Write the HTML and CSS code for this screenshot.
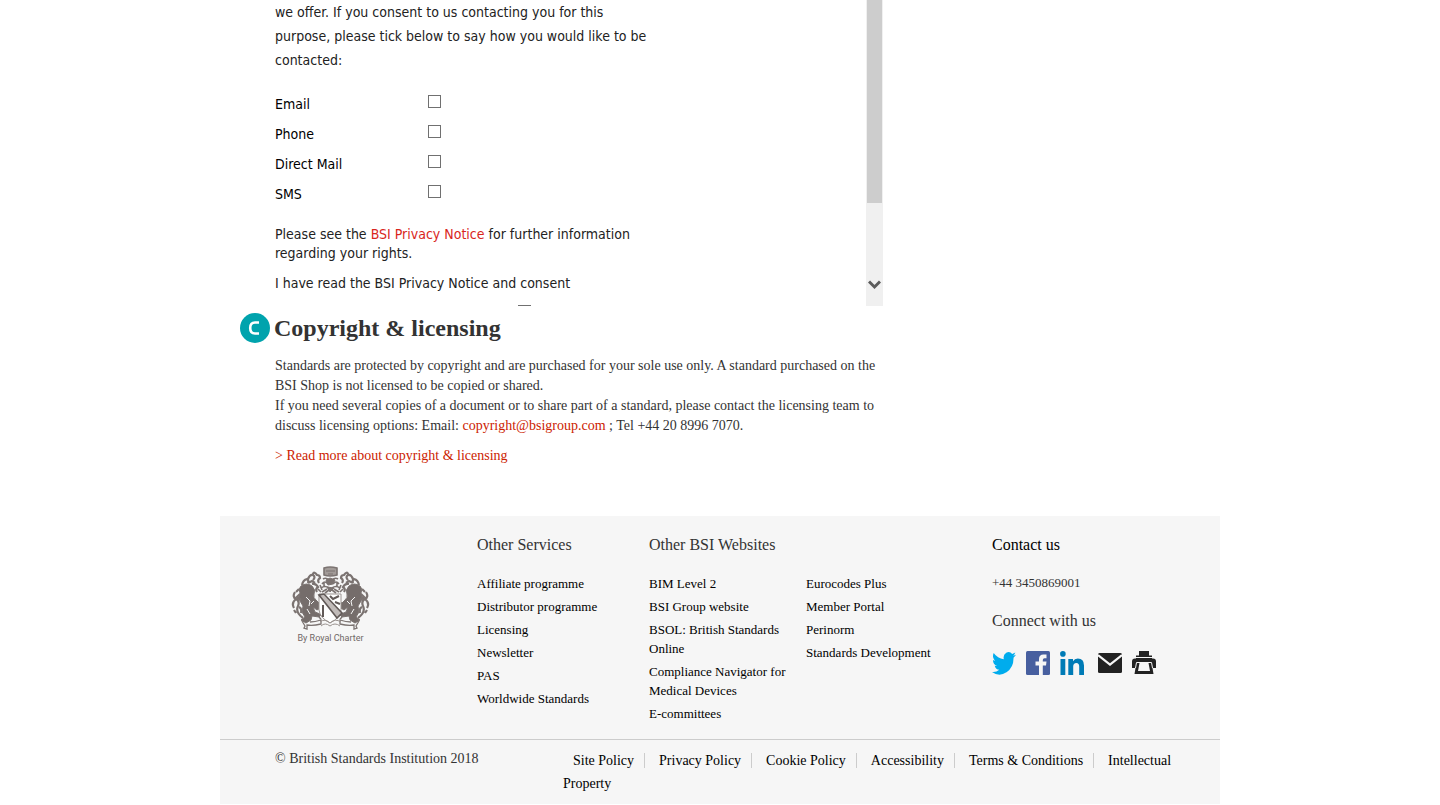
FILE: index.html
```html
<!DOCTYPE html>
<html lang="en">
<head>
<meta charset="utf-8">
<title>BSI Shop</title>
<link rel="stylesheet" href="styles.css">
</head>
<body>
<div class="page">
  <main class="main">
    <div class="frame">
      <form class="form">
        <p class="intro">we offer. If you consent to us contacting you for this purpose, please tick below to say how you would like to be contacted:</p>
        <div class="choices">
          <div class="choice"><label for="email">Email</label><input class="tick" type="checkbox" id="email"></div>
          <div class="choice"><label for="phone">Phone</label><input class="tick" type="checkbox" id="phone"></div>
          <div class="choice"><label for="mail">Direct Mail</label><input class="tick" type="checkbox" id="mail"></div>
          <div class="choice"><label for="sms">SMS</label><input class="tick" type="checkbox" id="sms"></div>
        </div>
        <p class="notice">Please see the <a class="red" href="#">BSI Privacy Notice</a> for further information regarding your rights.</p>
        <div class="consent"><label for="consent">I have read the BSI Privacy Notice and consent</label><input class="tick" type="checkbox" id="consent"></div>
      </form>
      <div class="scrollbar">
        <div class="thumb"></div>
        <button class="down" type="button" aria-label="Scroll down"><svg width="13" height="10" viewBox="0 0 13 10"><path d="M1 1.500L6.500 7L12 1.500" fill="none" stroke="#5c5c5c" stroke-width="3"/></svg></button>
      </div>
    </div>
    <section class="copyright">
      <div class="title">
        <svg class="badge" width="30" height="30" viewBox="0 0 30 30"><circle cx="15" cy="15" r="15" fill="#00a3ad"/><path d="M19 9.500H15Q10.200 9.500 10.200 15Q10.200 20.500 15 20.500H19" fill="none" stroke="#fff" stroke-width="2.600"/></svg>
        <h2>Copyright &amp; licensing</h2>
      </div>
      <div class="copy">
        <p>Standards are protected by copyright and are purchased for your sole use only. A standard purchased on the BSI Shop is not licensed to be copied or shared.<br>If you need several copies of a document or to share part of a standard, please contact the licensing team to discuss licensing options: Email: <a class="red" href="#">copyright@bsigroup.com</a> ; Tel +44 20 8996 7070.</p>
        <p><a class="red" href="#">&gt; Read more about copyright &amp; licensing</a></p>
      </div>
    </section>
  </main>
  <footer class="footer">
    <div class="columns">
      <figure class="crest">
        <svg width="80" height="66" viewBox="0 0 80 66" fill="none" stroke="#7b7371">
          <defs>
            <g id="supporter">
              <path d="M10 20Q16 16 21 20Q25 24 23 28Q22 32 25 34L28 37L32 35L31 41L26 44L22 41L24 46L29 48L28 51L21 50L20 54L15 57L10 54L14 51L11 46L12 40L9 35Q7 31 9 27Q7 23 10 20Z" fill="#756d6b"/>
              <path d="M11 19Q12 14 16 13Q18 14 17 17M17 13Q19 8 22 9Q25 11 22 14M21 18Q25 17 27 21Q24 23 26 26M22 8Q23 5 26 9Q29 9 29 12Q26 14 28 17M17 17L21 15L24 17" stroke-width="2.200"/>
              <path d="M12 52Q4 46 7 40Q9 35 5 33Q1 31 4 26M5 33Q0 37 3 42M8 41Q11 42 10 47M5 26L8 23M9 28L6 31L10 34M5 47L3 44" stroke-width="2.200"/>
              <path d="M15 31L19 35L18 40M16 43L19 48M23 35L20 38" stroke="#f6f6f6" stroke-width="1"/>
              <path d="M11 55L14 60L13 62L16 63L16 59Q22 60 30 58V54Q24 56 19 56M30 53Q27 51 29 49Q35 50 37 54" stroke-width="1.300"/>
              <path d="M32 13Q35 11 38 14M31 18Q34 14 37 18M30 22Q34 19 38 22M31 26L36 23M29 19L31 24M34 27L38 24M27 23L30 26M33 16V21" stroke-width="1.600"/>
            </g>
          </defs>
          <use href="#supporter"/><use href="#supporter" transform="translate(79 0) scale(-1 1)"/>
          <path d="M33 2Q39 0 46 2V9Q39 11 33 9Z" fill="#a29b98" stroke-width="1.600"/>
          <path d="M35 5H44M37 8H42" stroke-width="1"/>
          <path d="M35 14L39 12L44 14L42 18L37 19ZM36 21L43 22L39 26Z" fill="#7b7371"/>
          <path d="M28 28H50V44Q49 52 39 57Q29 52 28 44Z" fill="#fff" stroke="#9a9390" stroke-width="1"/>
          <path d="M28 29L33 28L51 47L46 52Z" fill="#c1bbb9" stroke="#625a58" stroke-width="1.600"/>
          <path d="M32 39V51M39 30L42 33L48 30M44 36L49 38" stroke="#625a58" stroke-width="2"/>
          <path d="M29 56Q34 52 39 57Q44 52 50 56M30 60Q34 56 39 60Q44 56 49 60" stroke="#9a9390" stroke-width="1"/>
        </svg>
        <figcaption>By Royal Charter</figcaption>
      </figure>
      <nav class="services">
        <h3>Other Services</h3>
        <ul>
          <li><a href="#">Affiliate programme</a></li><li><a href="#">Distributor programme</a></li><li><a href="#">Licensing</a></li><li><a href="#">Newsletter</a></li><li><a href="#">PAS</a></li><li><a href="#">Worldwide Standards</a></li>
        </ul>
      </nav>
      <nav class="websites">
        <h3>Other BSI Websites</h3>
        <div class="lists">
          <ul>
            <li><a href="#">BIM Level 2</a></li><li><a href="#">BSI Group website</a></li><li><a href="#">BSOL: British Standards Online</a></li><li><a href="#">Compliance Navigator for Medical Devices</a></li><li><a href="#">E-committees</a></li>
          </ul>
          <ul>
            <li><a href="#">Eurocodes Plus</a></li><li><a href="#">Member Portal</a></li><li><a href="#">Perinorm</a></li><li><a href="#">Standards Development</a></li>
          </ul>
        </div>
      </nav>
      <div class="contact">
        <h3><a href="#">Contact us</a></h3>
        <p class="tel">+44 3450869001</p>
        <h3 class="connect">Connect with us</h3>
        <div class="social">
          <a href="#" aria-label="Twitter"><svg width="24" height="24" viewBox="0 0 24 24"><path fill="#00aced" d="M24 4.600a10 10 0 0 1-2.800.8 5 5 0 0 0 2.100-2.700 10 10 0 0 1-3.100 1.200 4.900 4.900 0 0 0-8.400 4.500A14 14 0 0 1 1.700 3.100a4.900 4.900 0 0 0 1.500 6.600 5 5 0 0 1-2.200-.6 4.900 4.900 0 0 0 3.900 4.900 5 5 0 0 1-2.200.1 4.900 4.900 0 0 0 4.600 3.400A9.900 9.900 0 0 1 0 19.500 14 14 0 0 0 21.500 7.100 10 10 0 0 0 24 4.600z" transform="matrix(1 0 0 1.150 0 -1.500)"/></svg></a>
          <a href="#" aria-label="Facebook"><svg width="24" height="24" viewBox="0 0 24 24"><rect width="24" height="24" rx="1.500" fill="#475f9f"/><path fill="#f6f6f6" d="M13 24V14.500H9.500V10.500H13V8Q13 3.500 17.500 3.500H20.500V7.200H18.500Q16.800 7.200 16.800 9V10.500H20.500L20 14.500H16.800V24Z"/></svg></a>
          <a class="wide" href="#" aria-label="LinkedIn"><svg width="24" height="24" viewBox="0 0 24 24" fill="#007bb6"><circle cx="2.900" cy="2.900" r="2.800"/><path d="M.5 8H5.300V24H.5ZM8.300 8H13V10.200Q14.500 7.600 17.800 7.600Q24 7.600 24 14.500V24H19.200V15.500Q19.200 11.900 16.400 11.900Q13.200 11.900 13.200 15.500V24H8.300Z"/></svg></a>
          <a href="#" aria-label="Email"><svg width="24" height="24" viewBox="0 0 24 24"><rect y="2" width="24" height="20" rx="1.500" fill="#222"/><path d="M0 4L12 13.500L24 4" fill="none" stroke="#f6f6f6" stroke-width="2.200"/></svg></a>
          <a href="#" aria-label="Print"><svg width="24" height="24" viewBox="0 0 24 24"><path fill="#222" d="M7 0H17V4.500H20V7.500H21Q24 7.500 24 10.500V17H20.500L21.500 23H2.500L3.500 17H0V10.500Q0 7.500 3 7.500H4V4.500H7Z"/><path fill="none" stroke="#f6f6f6" d="M3 6.500H21M3.500 17L4.500 11.500H19.500L20.500 17"/><path fill="#f6f6f6" d="M7.500 12H16.500L18 20H6Z"/></svg></a>
        </div>
      </div>
    </div>
    <div class="legal">
      <p class="owner">© British Standards Institution 2018</p>
      <nav class="policies"><a href="#">Site Policy</a><a href="#">Privacy Policy</a><a href="#">Cookie Policy</a><a href="#">Accessibility</a><a href="#">Terms &amp; Conditions</a><a href="#">Intellectual Property</a></nav>
    </div>
  </footer>
</div>
</body>
</html>
```

FILE: styles.css
```css
* { box-sizing: border-box; }
body { margin: 0; background: #fff; color: #333; font: 14px/20px "Liberation Serif", "Times New Roman", serif; }
h2, h3, p, ul, figure { margin: 0; padding: 0; }
ul { list-style: none; }
a { color: #000; text-decoration: none; }
.red { color: #c20; }
.page { max-width: 1000px; margin: 0 auto; }
.main { max-width: 663px; padding-bottom: 50px; }
.frame { display: flex; justify-content: space-between; height: 306px; overflow: hidden; padding-left: 55px; }
.form { width: 380px; color: #222; font: 14px/20px Tahoma, "DejaVu Sans Condensed", sans-serif; }
.form .red { color: #d9261c; }
.intro { line-height: 24px; }
.choices { margin-top: 22px; color: #000; }
.choice { display: flex; height: 30px; align-items: flex-start; }
.choice label { width: 153px; line-height: 20px; }
.tick { appearance: none; width: 13px; height: 13px; margin: 1px 0 0; background: #fff; border: 1px solid #707070; }
.notice { margin-top: 11px; line-height: 19px; }
.consent { display: flex; flex-direction: column; margin-top: 10px; }
.consent .tick { margin: 12px 0 0 243px; }
.scrollbar { display: flex; flex-direction: column; justify-content: space-between; width: 17px; background: #f0f0f0; }
.thumb { height: 203px; margin-left: 1px; margin-right: 1px; background: #cdcdcd; }
.down { display: flex; justify-content: center; padding: 0; margin-bottom: 16px; border: 0; background: none; }
.title { display: flex; align-items: center; gap: 4px; padding: 7px 0 0 20px; }
h2 { font-size: 24px; line-height: 30px; }
.copy { display: grid; gap: 10px; padding: 13px 0 0 55px; }
.footer { background: #f6f6f6; }
.columns { display: grid; grid-template-columns: 202px 172px 343px 1fr; padding: 16px 0 16px 55px; }
.crest { width: 111px; padding-top: 34px; display: flex; flex-direction: column; align-items: center; }
.crest figcaption { color: #706866; font: 9px/12px Roboto, sans-serif; }
h3 { font-size: 16px; font-weight: normal; line-height: 26px; margin-bottom: 15px; }
.services ul, .lists ul { display: grid; align-content: start; gap: 4px; padding-top: 1px; font-size: 13px; line-height: 19px; }
.lists { display: grid; grid-template-columns: 140px 1fr; column-gap: 17px; }
.tel { font-size: 13px; line-height: 19px; }
.connect { margin: 16px 0 17px; }
.social { display: flex; gap: 10px; }
.social a, .social svg { display: block; }
.social .wide { margin-right: 4px; }
.legal { display: flex; justify-content: space-between; border-top: 1px solid #ccc; padding: 9px 40px 9px 55px; }
.policies { width: 617px; line-height: 23px; }
.policies a { padding: 0 10px; border-right: 1px solid #ccc; }
.policies a + a { padding-left: 14px; }
.policies a:last-child { border-right: 0; }
```
